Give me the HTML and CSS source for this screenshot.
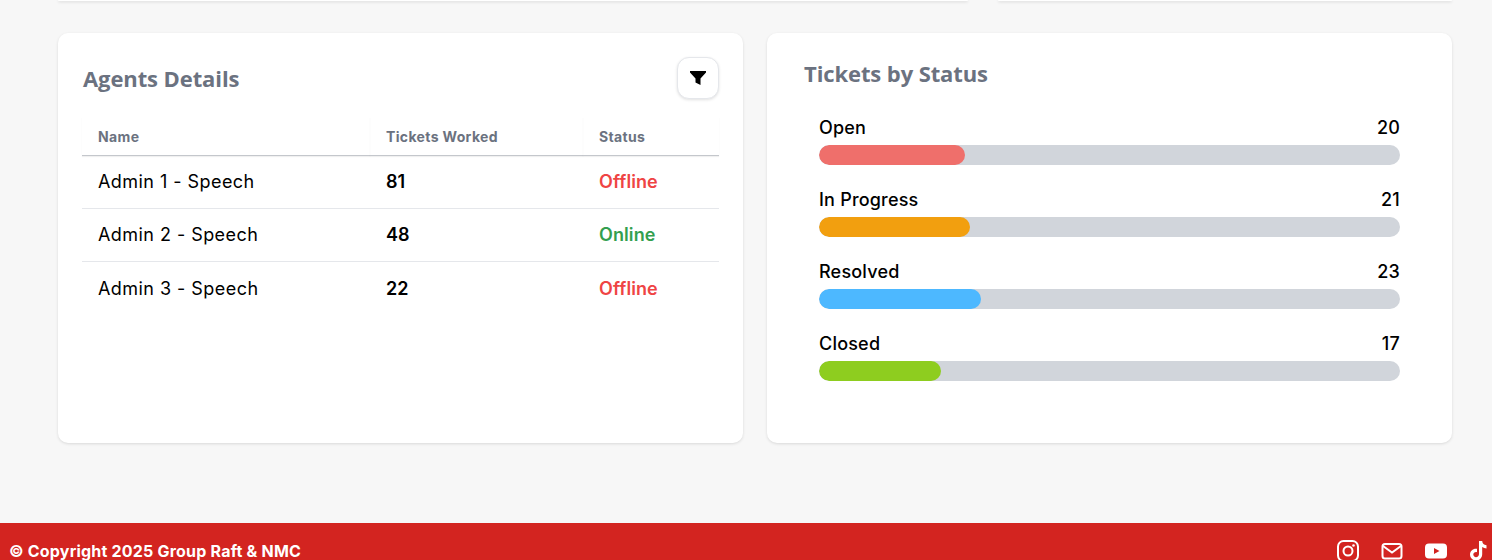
FILE: index.html
```html
<!DOCTYPE html>
<html lang="en">
<head>
    <meta charset="UTF-8">
    <meta name="viewport" content="width=device-width, initial-scale=1.0">
    <title>Dashboard</title>
    <link rel="stylesheet" href="styles.css">
</head>
<body>
    <main class="content">
        <div class="topRow">
            <div class="topCard"></div>
            <div class="topCard"></div>
        </div>
        <div class="cardRow">
            <section class="card agents">
                <div class="cardHead">
                    <h2 class="cardTitle">Agents Details</h2>
                    <button class="filterBtn" type="button" aria-label="Filter">
                        <svg width="16" height="14" viewBox="0 0 16 14"><path d="M0 0h16v1.500L10.500 7.500V14L5.500 11.500V7.500L0 1.500z" fill="#000"/></svg>
                    </button>
                </div>
                <table class="agentTable">
                    <thead>
                        <tr><th class="colName">Name</th><th class="colTickets">Tickets Worked</th><th>Status</th></tr>
                    </thead>
                    <tbody>
                        <tr><td>Admin 1 - Speech</td><td class="count">81</td><td class="offline">Offline</td></tr>
                        <tr><td>Admin 2 - Speech</td><td class="count">48</td><td class="online">Online</td></tr>
                        <tr><td>Admin 3 - Speech</td><td class="count">22</td><td class="offline">Offline</td></tr>
                    </tbody>
                </table>
            </section>
            <section class="card status">
                <h2 class="cardTitle">Tickets by Status</h2>
                <div class="bars">
                    <div class="barItem">
                        <div class="barLabel"><span>Open</span><span>20</span></div>
                        <div class="barTrack"><div class="barFill openFill" style="width: 25.100%"></div></div>
                    </div>
                    <div class="barItem">
                        <div class="barLabel"><span>In Progress</span><span>21</span></div>
                        <div class="barTrack"><div class="barFill progressFill" style="width: 26%"></div></div>
                    </div>
                    <div class="barItem">
                        <div class="barLabel"><span>Resolved</span><span>23</span></div>
                        <div class="barTrack"><div class="barFill resolvedFill" style="width: 27.900%"></div></div>
                    </div>
                    <div class="barItem">
                        <div class="barLabel"><span>Closed</span><span>17</span></div>
                        <div class="barTrack"><div class="barFill closedFill" style="width: 21%"></div></div>
                    </div>
                </div>
            </section>
        </div>
    </main>
    <footer class="footer">
        <p class="copyright">© Copyright 2025 Group Raft &amp; NMC</p>
        <div class="socials">
            <svg width="24" height="24" viewBox="0 0 24 24" fill="none" stroke="#fff" stroke-width="2"><rect x="2" y="2" width="20" height="20" rx="5.500"/><circle cx="12" cy="12" r="4.500"/><circle cx="17.500" cy="6.500" r="1.300" fill="#fff" stroke="none"/></svg>
            <svg width="24" height="24" viewBox="0 0 24 24" fill="none" stroke="#fff" stroke-width="2"><rect x="2.500" y="5" width="19" height="14.500" rx="2.500"/><path d="M3 7l9 6.500L21 7"/></svg>
            <svg width="24" height="24" viewBox="0 0 24 24"><path fill-rule="evenodd" fill="#fff" d="M5 4.500h14a4 4 0 0 1 4 4v7a4 4 0 0 1-4 4H5a4 4 0 0 1-4-4v-7a4 4 0 0 1 4-4zM10 9v6l5.500-3z"/></svg>
            <svg class="tiktok" width="24" height="24" viewBox="0 0 24 24"><path fill="#fff" d="M13 2h3.200c.2 2.400 1.700 4 4.300 4.200v3.200c-1.600 0-3-.5-4.300-1.400v7.200c0 3.700-2.800 6.300-6.200 6.300-3.500 0-6-2.700-6-5.900 0-3.600 3.100-6.400 7-5.800v3.400c-2-.5-3.700.7-3.700 2.400 0 1.500 1.200 2.600 2.700 2.600 1.700 0 3-1.200 3-3.200z"/></svg>
        </div>
    </footer>
</body>
</html>
```

FILE: styles.css
```css
html, body {
    height: 560px;
    margin: 0;
    overflow: hidden;
}
body {
    background-color: #f7f7f7;
    font-family: "Inter", "Liberation Sans", sans-serif;
    color: #000;
}
.content {
    height: 523px;
    padding: 0 40px 0 58px;
    box-sizing: border-box;
}
.topRow {
    display: flex;
    gap: 30px;
    height: 1px;
    margin-bottom: 32px;
}
.topCard {
    background: #fff;
    border-radius: 0 0 10px 10px;
    box-shadow: 0 1px 3px rgba(0, 0, 0, 0.2);
}
.topCard:first-child {
    width: 910px;
}
.topCard:last-child {
    width: 454px;
}
.cardRow {
    display: grid;
    grid-template-columns: 1fr 1fr;
    gap: 24px;
}
.card {
    height: 410px;
    background: #fff;
    border-radius: 10px;
    box-shadow: 0 1px 3px rgba(0, 0, 0, 0.12);
    box-sizing: border-box;
}
.cardTitle {
    margin: 0;
    font-family: "Open Sans", sans-serif;
    font-size: 22px;
    font-weight: 700;
    letter-spacing: -0.1px;
    color: #6b7280;
}
.agents {
    padding: 24px;
}
.cardHead {
    display: flex;
    justify-content: space-between;
    align-items: center;
    height: 42px;
    margin-bottom: 18px;
}
.cardHead .cardTitle {
    padding-left: 1px;
}
.filterBtn {
    display: flex;
    justify-content: center;
    align-items: center;
    width: 42px;
    height: 42px;
    padding: 0;
    background: #fff;
    border: 1px solid #e5e7eb;
    border-radius: 12px;
    box-shadow: 0 1px 3px rgba(0, 0, 0, 0.12);
}
.agentTable {
    width: 100%;
    border-collapse: separate;
    border-spacing: 0;
    table-layout: fixed;
}
.colName {
    width: 288px;
}
.colTickets {
    width: 213px;
}
.agentTable th {
    height: 39px;
    padding: 1px 16px 0;
    text-align: left;
    font-size: 14px;
    font-weight: 700;
    letter-spacing: 0.35px;
    color: #6b7280;
    border-bottom: 1px solid #c4c7cc;
    box-shadow: 0 1px 1px rgba(0, 0, 0, 0.06);
    box-sizing: border-box;
}
.agentTable td {
    height: 53px;
    padding: 0 16px 1px;
    font-size: 18px;
    letter-spacing: 0.45px;
    border-bottom: 1px solid #e5e7eb;
    box-sizing: border-box;
}
.agentTable tbody tr:last-child td {
    border-bottom: none;
}
.agentTable .count {
    font-weight: 600;
    letter-spacing: 0;
}
.agentTable .offline {
    font-weight: 600;
    letter-spacing: 0.1px;
    color: #ef4444;
}
.agentTable .online {
    font-weight: 600;
    letter-spacing: 0.1px;
    color: #339f4f;
}
.status {
    padding: 23px 52px 0 37px;
}
.status .cardTitle {
    line-height: 34px;
}
.bars {
    padding: 19px 0 0 15px;
}
.barItem {
    margin-bottom: 16px;
}
.barLabel {
    display: flex;
    justify-content: space-between;
    height: 36px;
    line-height: 37px;
    font-size: 18px;
    font-weight: 500;
    letter-spacing: 0.2px;
}
.barTrack {
    height: 20px;
    background: #d1d5db;
    border-radius: 10px;
    overflow: hidden;
}
.barFill {
    height: 100%;
    border-radius: 10px;
}
.openFill {
    background: #ef6f6b;
}
.progressFill {
    background: #f29f0f;
}
.resolvedFill {
    background: #4db8ff;
}
.closedFill {
    background: #8ecd1f;
}
.footer {
    display: flex;
    justify-content: space-between;
    align-items: flex-start;
    height: 60px;
    padding: 16px 2px 0 9px;
    background: #d32420;
    color: #fff;
    box-sizing: border-box;
}
.copyright {
    margin: 0;
    line-height: 24px;
    font-size: 16px;
    font-weight: 700;
    letter-spacing: 0.2px;
}
.socials {
    display: flex;
    gap: 20px;
}
.socials .tiktok {
    margin-left: -2px;
}
```
